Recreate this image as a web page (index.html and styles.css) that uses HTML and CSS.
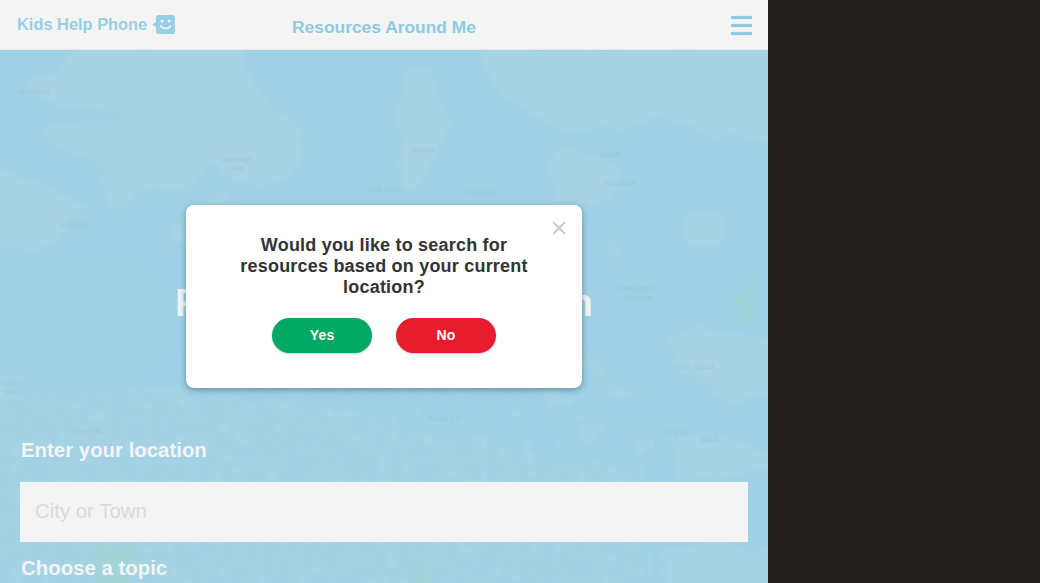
FILE: index.html
```html
<!DOCTYPE html>
<html lang="en">
  <head>
    <meta charset="UTF-8" />
    <meta name="viewport" content="width=device-width, initial-scale=1.0" />
    <title>Resources Around Me</title>
    <link rel="stylesheet" href="styles.css">
  </head>
  <body>
    <div class="app">
      <div class="header">
        <a class="brand">
          Kids Help Phone
          <svg class="brand-icon" viewBox="0 0 24 20" width="23" height="19">
            <path d="M6 0h15a3 3 0 0 1 3 3v14a3 3 0 0 1-3 3H7a3 3 0 0 1-3-3v-4.500L0 10l4-2.500V3a3 3 0 0 1 2-3z" fill="#97cfe6" />
            <circle cx="10.500" cy="6.500" r="1.400" fill="#f4f4f4" />
            <circle cx="18" cy="6.500" r="1.400" fill="#f4f4f4" />
            <path d="M9 11.500c2 3.500 8.500 3.500 10.500 0" fill="none" stroke="#f4f4f4" stroke-width="1.600" stroke-linecap="round" />
          </svg>
        </a>
        <div class="header-title">Resources Around Me</div>
        <div class="burger"><span></span><span></span><span></span></div>
      </div>

      <div class="main">
        <!-- map picture, only a backdrop -->
        <svg class="map" viewBox="0 50 768 533" preserveAspectRatio="none">
          <defs>
            <filter id="soft" x="-5%" y="-5%" width="110%" height="110%">
              <feTurbulence type="fractalNoise" baseFrequency="0.03" numOctaves="4" seed="4" result="noise" />
              <feDisplacementMap in="SourceGraphic" in2="noise" scale="24" />
              <feGaussianBlur stdDeviation="3.500" />
            </filter>
            <filter id="mottle" x="0" y="0" width="100%" height="100%">
              <feTurbulence type="fractalNoise" baseFrequency="0.09" numOctaves="4" seed="9" />
              <feColorMatrix values="0 0 0 0 0.60  0 0 0 0 0.80  0 0 0 0 0.91  0 0 0 1.500 -0.650" />
            </filter>
          </defs>
          <rect x="0" y="50" width="768" height="533" fill="#9fd0e6" />
          <g class="land" filter="url(#soft)">
            <polygon points="23,80 67,60 83,45 247,45 247,70 267,100 303,127 300,157 287,180 233,183 213,163 187,190 140,197 107,203 100,183 100,167 40,137 40,127 90,118 133,120 80,107 30,93" />
            <polygon points="-10,167 40,183 87,207 93,217 67,230 33,250 -10,250" />
            <polygon points="157,250 187,223 217,183 230,200 190,240" />
            <polygon points="480,45 775,45 775,143 717,133 677,127 660,113 617,127 567,133 533,117 500,93 487,73" />
            <polygon points="400,67 433,70 450,123 420,183 400,200" />
            <polygon points="553,143 620,167 613,203 553,203" />
            <polygon points="687,217 720,210 717,250 687,250" />
            <polygon points="670,340 700,327 775,340 775,390 733,407 677,367" />
            <polygon points="670,440 733,437 775,457 775,473 677,480" />
            <polygon points="663,550 717,540 775,553 775,590 667,590" />
            <polygon points="550,393 577,390 557,413" />
            <polygon points="580,427 607,420 590,447" />
            <polygon points="637,443 650,440 647,467" />
            <polygon points="600,387 633,387 617,400" />
            <polygon points="607,240 620,240 607,273" />
            <polygon points="587,357 610,363 600,387" />
            <polygon points="740,70 775,60 775,100" />
          </g>
          <g class="land-faint" filter="url(#soft)">
            <polygon points="-10,395 120,385 300,400 470,440 650,470 650,590 -10,590" />
            <polygon points="-10,260 150,270 175,340 100,385 -10,395" />
          </g>
          <rect x="0" y="390" width="660" height="193" filter="url(#mottle)" opacity="0.2" />
          <g class="green" filter="url(#soft)">
            <polygon points="730,300 757,280 750,330" />
            <polygon points="95,543 137,543 137,590 95,590" />
            <polygon points="417,567 430,560 433,590 417,590" />
            <polygon points="600,380 612,376 607,390" />
          </g>
          <g class="map-labels">
            <text x="18" y="94">Ulukhaktok</text>
            <text x="220" y="162">Cambridge</text>
            <text x="232" y="170">Bay</text>
            <text x="368" y="192">Gjoa Haven</text>
            <text x="61" y="227">Kugluktuk</text>
            <text x="409" y="152">Taloyoak</text>
            <text x="467" y="195">Kugaaruk</text>
            <text x="600" y="157">Igloolik</text>
            <text x="604" y="185">Hall Beach</text>
            <text x="619" y="291">Northwestern</text>
            <text x="625" y="300">Passages</text>
            <text x="428" y="421">Rankin Inlet</text>
            <text x="677" y="369">Cape Dorset</text>
            <text x="663" y="435">Kuujjuaq</text>
            <text x="700" y="442">Salluit</text>
            <text x="70" y="433">Yellowknife</text>
            <text x="2" y="386">WEST</text>
            <text x="2" y="395">ORIES</text>
          </g>
        </svg>

        <h1 class="page-title">Resources by location</h1>

        <div class="search">
          <label class="field-label">Enter your location</label>
          <input class="location-input" type="text" placeholder="City or Town" />
          <label class="field-label topic-label">Choose a topic</label>
        </div>

        <div class="modal">
          <span class="modal-close">
            <svg viewBox="0 0 14 14" width="14" height="14">
              <path d="M1 1l12 12M13 1L1 13" stroke="#cccccc" stroke-width="2.200" />
            </svg>
          </span>
          <p class="modal-text">Would you like to search for resources based on your current location?</p>
          <div class="modal-buttons">
            <button class="btn btn-yes">Yes</button>
            <button class="btn btn-no">No</button>
          </div>
        </div>
      </div>
    </div>
  </body>
</html>
```

FILE: styles.css
```css
body {
  font-family: "Liberation Sans", Arial, sans-serif;
  margin: 0;
  padding: 0;
  background-color: #22211f;
  overflow: hidden;
}

.app {
  width: 768px;
  height: 583px;
  overflow: hidden;
}

.header {
  display: flex;
  align-items: center;
  justify-content: space-between;
  height: 50px;
  box-sizing: border-box;
  padding: 0 16px 0 17px;
  background-color: #f4f4f4;
  border-bottom: 1px solid #eaeaea;
  font-weight: bold;
  position: relative;
}

.brand {
  display: flex;
  align-items: center;
  gap: 5px;
  margin-top: -1px;
  font-size: 16.400px;
  color: #97cfe6;
}

.brand-icon {
  margin-top: 1px;
}

.header-title {
  position: absolute;
  left: 0;
  right: 0;
  top: 17px;
  text-align: center;
  font-size: 17.400px;
  color: #8ecae2;
}

.burger {
  display: flex;
  flex-direction: column;
  gap: 5px;
  width: 21px;
  margin-top: 1px;
}

.burger span {
  display: block;
  height: 3px;
  background-color: #8ecae2;
  box-shadow: 0 0 1px #8ecae2;
}

.main {
  position: relative;
  height: 533px;
  overflow: hidden;
}

.map {
  position: absolute;
  left: 0;
  top: 0;
  width: 768px;
  height: 533px;
}

.land {
  fill: #a7d3e3;
}

.land-faint {
  fill: #a3d2e4;
}

.green {
  fill: #a3d4d8;
}

.map-labels {
  font-size: 6.500px;
  fill: #8fb4c4;
  opacity: 0.4;
}

.page-title {
  position: relative;
  margin: 0;
  padding-top: 230px;
  height: 40px;
  line-height: 46px;
  text-align: center;
  font-size: 39.200px;
  font-weight: bold;
  color: #f4f4f4;
}

.search {
  position: relative;
  padding: 117px 20px 0;
}

.field-label {
  display: block;
  margin-left: 1px;
  font-size: 20.400px;
  line-height: 26px;
  font-weight: bold;
  color: #f4f4f4;
}

.location-input {
  display: block;
  width: 100%;
  height: 60px;
  box-sizing: border-box;
  margin-top: 19px;
  padding: 0 15px 2px;
  border: 0;
  background-color: #f4f4f4;
  font-family: inherit;
  font-size: 20.400px;
}

.location-input::placeholder {
  color: #d9d9d9;
}

.topic-label {
  margin-top: 13px;
}

.modal {
  position: absolute;
  left: 186px;
  top: 155px;
  width: 396px;
  height: 183px;
  box-sizing: border-box;
  padding-top: 30px;
  background-color: #fff;
  border-radius: 8px;
  box-shadow: 0 2px 6px rgba(40, 80, 100, 0.5);
}

.modal-close {
  position: absolute;
  top: 16px;
  right: 16px;
  line-height: 0;
}

.modal-text {
  margin: 0 auto;
  width: 320px;
  text-align: center;
  font-size: 18px;
  line-height: 21px;
  font-weight: bold;
  letter-spacing: 0.2px;
  color: #333;
}

.modal-buttons {
  display: flex;
  justify-content: center;
  gap: 24px;
  margin-top: 20px;
}

.btn {
  width: 100px;
  height: 35px;
  padding: 0 0 2px;
  border: 0;
  border-radius: 18px;
  font-family: inherit;
  font-size: 14px;
  font-weight: bold;
  letter-spacing: 0.2px;
  color: #fff;
  box-shadow: 0 1px 2px rgba(0, 0, 0, 0.2);
}

.btn-yes {
  background-color: #02a863;
}

.btn-no {
  background-color: #e71d2f;
}
```
